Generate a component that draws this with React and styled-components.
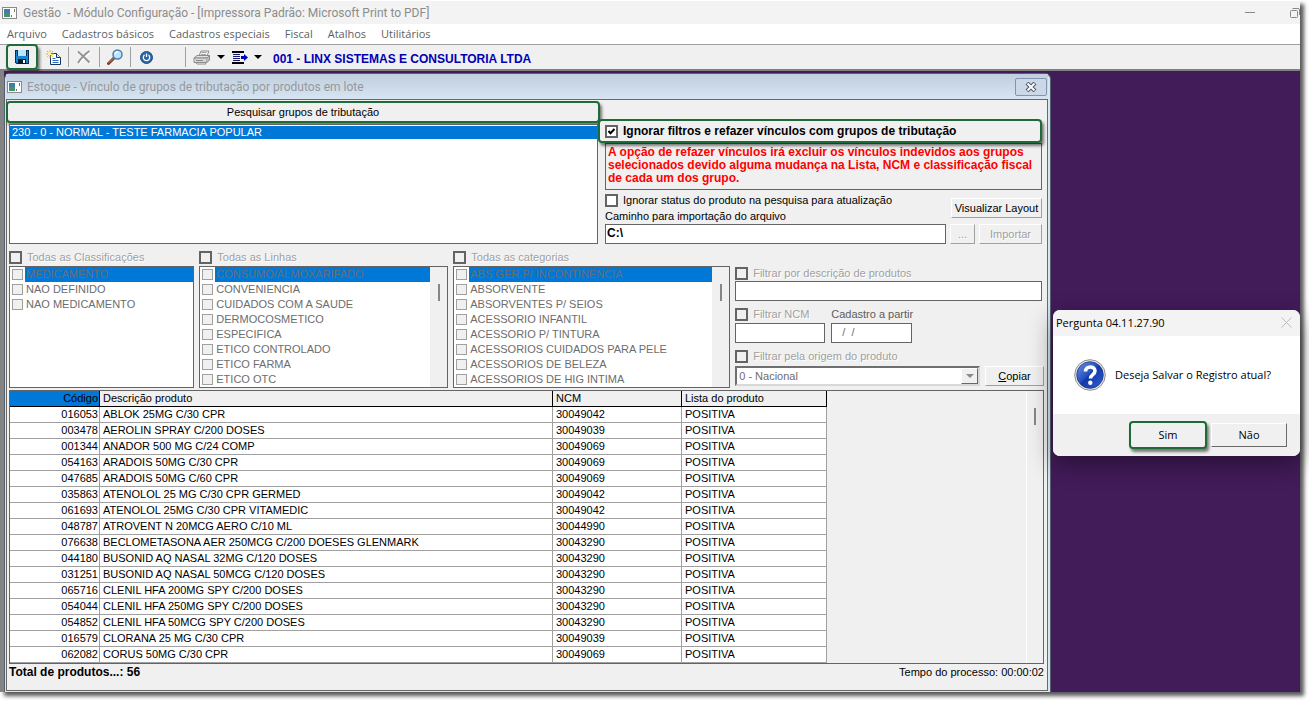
import React from 'react'
import styled, { createGlobalStyle, css } from 'styled-components'

const lists = [
  {
    title: 'Todas as Classificações',
    items: ['MEDICAMENTO', 'NAO DEFINIDO', 'NAO MEDICAMENTO'],
    scroll: false,
  },
  {
    title: 'Todas as Linhas',
    items: ['CONSUMO/ALMOXARIFADO', 'CONVENIENCIA', 'CUIDADOS COM A SAUDE', 'DERMOCOSMETICO', 'ESPECIFICA', 'ETICO CONTROLADO', 'ETICO FARMA', 'ETICO OTC'],
    scroll: true,
  },
  {
    title: 'Todas as categorias',
    items: ['ABS GER P/ INCONTINENCIA', 'ABSORVENTE', 'ABSORVENTES P/ SEIOS', 'ACESSORIO INFANTIL', 'ACESSORIO P/ TINTURA', 'ACESSORIOS CUIDADOS PARA PELE', 'ACESSORIOS DE BELEZA', 'ACESSORIOS DE HIG INTIMA'],
    scroll: true,
  },
]

const products = [
  ['016053', 'ABLOK 25MG C/30 CPR', '30049042'],
  ['003478', 'AEROLIN SPRAY C/200 DOSES', '30049039'],
  ['001344', 'ANADOR 500 MG C/24 COMP', '30049069'],
  ['054163', 'ARADOIS 50MG C/30 CPR', '30049069'],
  ['047685', 'ARADOIS 50MG C/60 CPR', '30049069'],
  ['035863', 'ATENOLOL 25 MG C/30 CPR GERMED', '30049042'],
  ['061693', 'ATENOLOL 25MG C/30 CPR VITAMEDIC', '30049042'],
  ['048787', 'ATROVENT N 20MCG AERO C/10 ML', '30044990'],
  ['076638', 'BECLOMETASONA AER 250MCG C/200 DOESES GLENMARK', '30043290'],
  ['044180', 'BUSONID AQ NASAL 32MG C/120 DOSES', '30043290'],
  ['031251', 'BUSONID AQ NASAL 50MCG C/120 DOSES', '30043290'],
  ['065716', 'CLENIL HFA 200MG SPY C/200 DOSES', '30043290'],
  ['054044', 'CLENIL HFA 250MG SPY C/200 DOSES', '30043290'],
  ['054852', 'CLENIL HFA 50MCG SPY C/200 DOSES', '30043290'],
  ['016579', 'CLORANA 25 MG C/30 CPR', '30049039'],
  ['062082', 'CORUS 50MG C/30 CPR', '30049069'],
]

const AppIcon = () => (
  <svg width="15" height="12" viewBox="0 0 15 12" aria-hidden="true">
    <rect x="0.5" y="0.5" width="14" height="11" fill="#fff" stroke="#8a8a8a" />
    <rect x="2" y="2" width="6" height="8" fill="#3f7fa6" />
    <rect x="2" y="6" width="6" height="4" fill="#4a9169" />
    <rect x="9" y="8" width="1" height="2" fill="#777" />
    <rect x="12" y="2" width="1" height="3" fill="#777" />
  </svg>
)

const SaveIcon = () => (
  <svg width="14" height="14" viewBox="0 0 14 14" aria-hidden="true">
    <path d="M0 0h14v14H1.500L0 12.500z" fill="#0b2d55" />
    <path d="M1 1h1v6h10V1h1v12H2L1 12z" fill="#1787d2" />
    <rect x="3" y="0" width="8" height="6" fill="#b9e6fb" />
    <rect x="1" y="6" width="12" height="2" fill="#1787d2" />
    <rect x="3" y="9" width="8" height="5" fill="#071a30" />
    <rect x="8" y="10" width="2" height="3" fill="#fff" />
  </svg>
)

const NewIcon = () => (
  <svg width="15" height="15" viewBox="0 0 15 15" aria-hidden="true">
    <path d="M4.500 3.500h6l4 4v7h-10z" fill="#fff" stroke="#16365f" />
    <path d="M10.500 3.500v4h4" fill="#cfe2f6" stroke="#16365f" />
    <path d="M6.500 8.500h3M6.500 10.500h6M6.500 12.500h6" stroke="#2a6fc0" />
    <path d="M4 0v8M0 4h8M1 1l6 6M7 1L1 7" stroke="#d9b020" strokeDasharray="2 1" />
    <circle cx="4" cy="4" r="1.500" fill="#fff27a" />
  </svg>
)

const DeleteIcon = () => (
  <svg width="14" height="14" viewBox="0 0 14 14" aria-hidden="true">
    <path d="M2 2l12 12M13.500 2L2 13.500" stroke="#fff" strokeWidth="1.500" fill="none" />
    <path d="M1 1.500C4 4 8 8 12.500 12.500M12.500 1C8 4 4 8 1 13" stroke="#929292" strokeWidth="1.800" fill="none" />
  </svg>
)

const SearchIcon = () => (
  <svg width="17" height="16" viewBox="0 0 17 16" aria-hidden="true">
    <path d="M7 9L1.500 14.500" stroke="#7c4029" strokeWidth="3" strokeLinecap="round" />
    <path d="M7 8.500L2 13.500" stroke="#c98b62" strokeWidth="1" />
    <circle cx="10.500" cy="5.500" r="4.500" fill="#bfe3fb" stroke="#4e7fae" strokeWidth="1.500" />
    <path d="M8 5a3 3 0 0 1 3-2" stroke="#fff" strokeWidth="1.500" fill="none" />
  </svg>
)

const PowerIcon = () => (
  <svg width="13" height="13" viewBox="0 0 13 13" aria-hidden="true">
    <circle cx="6.500" cy="6.500" r="6" fill="#2a66a5" stroke="#1c4f88" />
    <path d="M4.500 4a3.200 3.200 0 1 0 4 0" fill="none" stroke="#fff" strokeWidth="1.300" />
    <path d="M6.500 2.500v3.500" stroke="#fff" strokeWidth="1.300" />
  </svg>
)

const PrinterIcon = () => (
  <svg width="18" height="15" viewBox="0 0 18 15" aria-hidden="true">
    <path d="M6 6L8 1h8l-2 5" fill="#f4f4f4" stroke="#8c8c8c" />
    <path d="M8.500 2.500h5M8 4.500h5" stroke="#a5a5a5" />
    <path d="M1 8l3-2.500h12.500L14 8z" fill="#e2e2e2" stroke="#8c8c8c" />
    <path d="M1 8h13v4.500H1z" fill="#d6d6d6" stroke="#8c8c8c" />
    <path d="M14 8l2.500-2.500V10L14 12.500" fill="#bbb" stroke="#8c8c8c" />
    <path d="M3 12.500h9L13 14H4z" fill="#fff" stroke="#8c8c8c" />
    <path d="M3 10.500h7" stroke="#8c8c8c" />
  </svg>
)

const ExportIcon = () => (
  <svg width="16" height="13" viewBox="0 0 16 13" aria-hidden="true">
    <path d="M0 1h12M0 12h12" stroke="#000" strokeWidth="2" />
    <path d="M1 3.500h7M1 5.500h7M1 7.500h7M1 9.500h7" stroke="#1a1a70" />
    <path d="M9 6.500h4" stroke="#0000c8" strokeWidth="3" />
    <path d="M12 3l4 3.500-4 3.500z" fill="#0000c8" />
  </svg>
)

const Caret = () => (
  <svg width="8" height="4" viewBox="0 0 8 4" aria-hidden="true">
    <path d="M0 0h8L4 4z" fill="#000" />
  </svg>
)

const QuestionIcon = () => (
  <svg width="32" height="32" viewBox="0 0 32 32" aria-hidden="true">
    <defs>
      <linearGradient id="ball" x1="0" y1="0" x2="1" y2="1">
        <stop offset="0" stopColor="#6f95e6" />
        <stop offset="0.45" stopColor="#2450c0" />
        <stop offset="0.5" stopColor="#1338a4" />
        <stop offset="1" stopColor="#2f62e0" />
      </linearGradient>
    </defs>
    <circle cx="16" cy="16" r="15.300" fill="#e9e9e9" stroke="#8d8d8d" />
    <circle cx="16" cy="16" r="13.300" fill="url(#ball)" stroke="#1c3a86" strokeWidth="0.800" />
    <path d="M11.500 12.500c0-6 9.500-6 9.500-0.500 0 3.800-4.500 3.500-4.500 7.500" fill="none" stroke="#fff" strokeWidth="3.600" />
    <circle cx="16.300" cy="23.800" r="2.200" fill="#fff" />
  </svg>
)

const CheckItem = ({ id, label, bold, muted, callout, checked = false }) => (
  <CheckLabel htmlFor={id} $bold={bold} $muted={muted} $callout={callout}>
    <Check id={id} type="checkbox" defaultChecked={checked} disabled={muted} />
    {label}
  </CheckLabel>
)

const ListGroup = ({ title, items, scroll, name }) => (
  <Group>
    <CheckItem id={name} label={title} muted />
    <ListBox>
      <Options>
        {items.map((item, index) => (
          <Option key={item} htmlFor={`${name}-${index}`}>
            <Check id={`${name}-${index}`} type="checkbox" disabled $small />
            <OptionText $selected={index === 0}>{item}</OptionText>
          </Option>
        ))}
      </Options>
      {scroll && <ScrollBar><Thumb /></ScrollBar>}
    </ListBox>
  </Group>
)

const App = () => {
  return (
    <>
      <GlobalStyle />
      <Frame>
        <TitleBar>
          <AppIcon />
          <TitleText>Gestão&nbsp; - Módulo Configuração - [Impressora Padrão: Microsoft Print to PDF]</TitleText>
          <FrameButton aria-label="Minimizar">
            <svg width="10" height="10" viewBox="0 0 10 10"><path d="M0 4.500h10" stroke="#888" /></svg>
          </FrameButton>
          <FrameButton aria-label="Restaurar">
            <svg width="10" height="10" viewBox="0 0 10 10">
              <rect x="0.500" y="2.500" width="7" height="7" rx="1" fill="none" stroke="#888" />
              <path d="M2.500 0.500H8a1.500 1.500 0 0 1 1.500 1.500v5" fill="none" stroke="#888" />
            </svg>
          </FrameButton>
        </TitleBar>

        <MenuBar>
          {['Arquivo', 'Cadastros básicos', 'Cadastros especiais', 'Fiscal', 'Atalhos', 'Utilitários'].map((item) => (
            <MenuItem key={item}>{item}</MenuItem>
          ))}
        </MenuBar>

        <ToolBar>
          <ToolButton $callout aria-label="Salvar"><SaveIcon /></ToolButton>
          <ToolButton aria-label="Novo"><NewIcon /></ToolButton>
          <Separator />
          <ToolButton aria-label="Excluir"><DeleteIcon /></ToolButton>
          <Separator />
          <ToolButton aria-label="Pesquisar"><SearchIcon /></ToolButton>
          <Separator />
          <ToolButton aria-label="Sair"><PowerIcon /></ToolButton>
          <Separator $wide />
          <ToolButton $split aria-label="Imprimir"><PrinterIcon /><Caret /></ToolButton>
          <ToolButton $split aria-label="Exportar"><ExportIcon /><Caret /></ToolButton>
          <Company>001 - LINX SISTEMAS E CONSULTORIA LTDA</Company>
        </ToolBar>

        <Workspace>
          <Child>
            <ChildTitle>
              <AppIcon />
              <TitleText>Estoque - Vínculo de grupos de tributação por produtos em lote</TitleText>
              <CloseButton aria-label="Fechar">
                <svg width="12" height="10" viewBox="0 0 12 10">
                  <path d="M2 1l8 8M10 1L2 9" stroke="#4c5566" strokeWidth="4" />
                  <path d="M2.500 1.500l7 7M9.500 1.500l-7 7" stroke="#fff" strokeWidth="2" />
                </svg>
              </CloseButton>
            </ChildTitle>

            <Body>
              <TopArea>
                <GroupSearch>
                  <SearchButton>Pesquisar grupos de tributação</SearchButton>
                  <GroupList>
                    <GroupRow>230 - 0 - NORMAL - TESTE FARMACIA POPULAR</GroupRow>
                  </GroupList>
                </GroupSearch>
                <ImportArea>
                  <CheckItem id="refazer" label="Ignorar filtros e refazer vínculos com grupos de tributação" bold callout checked />
                  <Warning>
                    A opção de refazer vínculos irá excluir os vínculos indevidos aos grupos<br />
                    selecionados devido alguma mudança na Lista, NCM e classificação fiscal<br />
                    de cada um dos grupo.
                  </Warning>
                  <ImportHead>
                    <div>
                      <CheckItem id="status" label="Ignorar status do produto na pesquisa para atualização" />
                      <FieldLabel htmlFor="caminho">Caminho para importação do arquivo</FieldLabel>
                    </div>
                    <Button $width={91}>Visualizar Layout</Button>
                  </ImportHead>
                  <Line>
                    <Field id="caminho" defaultValue="C:\" $bold />
                    <Button $width={25} disabled>...</Button>
                    <Button $width={63} disabled>Importar</Button>
                  </Line>
                </ImportArea>
              </TopArea>

              <FilterArea>
                {lists.map((list, index) => (
                  <ListGroup key={list.title} name={`lista${index}`} {...list} />
                ))}
                <Filters>
                  <CheckItem id="filtroDescricao" label="Filtrar por descrição de produtos" muted />
                  <Field aria-label="Descrição" disabled />
                  <NcmLine>
                    <CheckItem id="filtroNcm" label="Filtrar NCM" muted />
                    <FieldLabel htmlFor="cadastro" $dim>Cadastro a partir</FieldLabel>
                    <Field aria-label="NCM" disabled />
                    <Field id="cadastro" defaultValue="  /  /" disabled />
                  </NcmLine>
                  <CheckItem id="filtroOrigem" label="Filtrar pela origem do produto" muted />
                  <CopyLine>
                    <SelectBox>
                      <Select aria-label="Origem do produto" disabled>
                        <option>0 - Nacional</option>
                      </Select>
                      <SelectArrow>
                        <svg width="8" height="4" viewBox="0 0 8 4"><path d="M0 0h8L4 4z" fill="#8a8a8a" /></svg>
                      </SelectArrow>
                    </SelectBox>
                    <Button $width={59}><u>C</u>opiar</Button>
                  </CopyLine>
                </Filters>
              </FilterArea>

              <Grid>
                <Table>
                  <colgroup>
                    <col width="90" />
                    <col width="453" />
                    <col width="129" />
                    <col width="145" />
                  </colgroup>
                  <thead>
                    <tr>
                      <Th $active>Código</Th>
                      <Th>Descrição produto</Th>
                      <Th>NCM</Th>
                      <Th>Lista do produto</Th>
                    </tr>
                  </thead>
                  <tbody>
                    {products.map(([code, name, ncm]) => (
                      <tr key={code}>
                        <Td $right>{code}</Td>
                        <Td>{name}</Td>
                        <Td>{ncm}</Td>
                        <Td>POSITIVA</Td>
                      </tr>
                    ))}
                  </tbody>
                </Table>
                <ScrollBar $line><Thumb /></ScrollBar>
              </Grid>

              <Footer>
                <strong>Total de produtos...: 56</strong>
                <span>Tempo do processo: 00:00:02</span>
              </Footer>
            </Body>
          </Child>

          <Dialog role="dialog" aria-labelledby="pergunta">
            <DialogTitle>
              <span id="pergunta">Pergunta 04.11.27.90</span>
              <FrameButton aria-label="Fechar pergunta">
                <svg width="11" height="11" viewBox="0 0 11 11"><path d="M0.500 0.500l10 10M10.500 0.500l-10 10" stroke="#bdbdbd" /></svg>
              </FrameButton>
            </DialogTitle>
            <DialogBody>
              <QuestionIcon />
              <p>Deseja Salvar o Registro atual?</p>
            </DialogBody>
            <DialogActions>
              <DialogButton $callout>Sim</DialogButton>
              <DialogButton>Não</DialogButton>
            </DialogActions>
          </Dialog>
        </Workspace>
      </Frame>
    </>
  )
}

const GlobalStyle = createGlobalStyle`
  * {
    box-sizing: border-box;
  }

  body {
    margin: 0;
    background: #fff;
    font-family: "Liberation Sans", Arial, sans-serif;
    font-size: 11px;
    color: #000;
  }

  button, input, select {
    font: inherit;
    color: inherit;
    margin: 0;
  }

  strong {
    font-size: 12px;
  }

  svg {
    display: block;
    flex: none;
  }
`;

const calloutStyle = css`
  border: 2px solid #1d6b37;
  border-radius: 4px;
  box-shadow: 2px 3px 3px rgba(0, 0, 0, 0.5);
`;

const boldText = css`
  font-size: 12px;
  font-weight: bold;
`;

const Frame = styled.div`
  display: flex;
  flex-direction: column;
  min-height: calc(100vh - 9px);
  margin: 0 9px 9px 0;
  border-top: 1px solid #fff;
  box-shadow: 4px 4px 4px rgba(0, 0, 0, 0.65);
`;

const TitleBar = styled.header`
  display: flex;
  align-items: center;
  gap: 6px;
  height: 23px;
  padding-left: 2px;
  background: #f3f3f3;
  color: #8c8c8c;
`;

const TitleText = styled.span`
  flex: 1;
  font-family: Roboto, sans-serif;
  font-size: 12px;
  white-space: pre;
`;

const FrameButton = styled.button`
  display: flex;
  padding: 0;
  border: 0;
  background: none;

  & + & {
    margin-left: 29px;
  }
`;

const MenuBar = styled.nav`
  display: flex;
  align-items: center;
  gap: 15px;
  height: 20px;
  padding-left: 7px;
  background: #fff;
`;

const MenuItem = styled.button`
  padding: 0;
  border: 0;
  background: none;
  font-family: "Open Sans", "Noto Sans", sans-serif;
  line-height: 18px;
  color: #5f5f5f;
`;

const ToolBar = styled.div`
  display: flex;
  align-items: center;
  height: 27px;
  padding-left: 6px;
  background: #f0f0f0;
  border-top: 1px solid #a0a0a0;
  border-bottom: 2px solid #808080;
`;

const ToolButton = styled.button`
  display: flex;
  align-items: center;
  justify-content: center;
  gap: 6px;
  width: ${({ $split }) => ($split ? '38px' : '30px')};
  height: 24px;
  padding: 0;
  border: 0;
  background: none;
  ${({ $callout }) => $callout && css`
    width: 32px;
    height: 26px;
    ${calloutStyle}
  `}
`;

const Separator = styled.span`
  width: 1px;
  height: 20px;
  background: #a0a0a0;
  margin-left: ${({ $wide }) => ($wide ? '24px' : '0')};
  margin-right: ${({ $wide }) => ($wide ? '4px' : '0')};
`;

const Company = styled.strong`
  margin-left: 7px;
  padding-top: 3px;
  color: #0000b4;
`;

const Workspace = styled.main`
  flex: 1;
  display: flex;
  gap: 2px;
  padding-top: 2px;
  background: #421b59;
  border-left: 4px solid #838383;
`;

const Child = styled.section`
  flex: 1;
  display: flex;
  flex-direction: column;
  padding: 0 2px 1px 1px;
  background: #d7e4f2;
  border: 1px solid #55606e;
  border-bottom: 0;
  border-radius: 6px 6px 0 0;
`;

const ChildTitle = styled.header`
  display: flex;
  align-items: center;
  gap: 5px;
  height: 25px;
  padding: 0 1px;
  background: linear-gradient(#c0cfdd, #d7e4f2);
  color: #94989c;
`;

const CloseButton = styled.button`
  display: flex;
  align-items: center;
  justify-content: center;
  width: 32px;
  height: 18px;
  border: 1px solid #8394b3;
  border-radius: 2px;
  background: #cad8e7;
`;

const Body = styled.div`
  flex: 1;
  padding: 1px 3px 0 2px;
  background: #f0f0f0;
  border: 1px solid #696969;
`;

const TopArea = styled.div`
  display: grid;
  grid-template-columns: 589fr 437fr;
  gap: 7px;
  padding-right: 2px;
`;

const GroupSearch = styled.div`
  display: flex;
  flex-direction: column;
`;

const SearchButton = styled.button`
  height: 22px;
  margin: 0 -2px 1px -3px;
  padding: 0;
  background: #f0f0f0;
  ${calloutStyle}
`;

const GroupList = styled.div`
  flex: 1;
  padding: 1px 0;
  background: #fff;
  border: 1px solid #646464;
`;

const GroupRow = styled.div`
  padding: 0 2px;
  background: #0078d7;
  color: #fff;
  line-height: 13px;
`;

const ImportArea = styled.div`
  padding-top: 18px;
`;

const CheckLabel = styled.label`
  display: flex;
  align-items: center;
  gap: 5px;
  height: 16px;
  white-space: nowrap;
  ${({ $muted }) => $muted && css`
    color: #a0a0a0;
    text-shadow: 1px 1px #fff;
  `}
  ${({ $bold }) => $bold && boldText}
  ${({ $callout }) => $callout && css`
    position: relative;
    height: 24px;
    margin-left: -7px;
    padding-left: 5px;
    background: #f0f0f0;
    ${calloutStyle}
  `}
`;

const Check = styled.input`
  appearance: none;
  flex: none;
  width: ${({ $small }) => ($small ? '11px' : '13px')};
  height: ${({ $small }) => ($small ? '11px' : '13px')};
  border: ${({ $small }) => ($small ? '1px solid #a0a0a0' : '2px solid #646464')};
  background: #fff;

  &:disabled {
    background: #f0f0f0;
  }

  &:checked {
    background: #fff url("data:image/svg+xml,%3Csvg xmlns='http://www.w3.org/2000/svg' viewBox='0 0 9 9'%3E%3Cpath d='M1.500 4l2 2.200L7.500 2' fill='none' stroke='%23000' stroke-width='2'/%3E%3C/svg%3E");
  }
`;

const Warning = styled.p`
  height: 47px;
  margin: 0 0 2px;
  padding: 2px;
  border: 1px solid #646464;
  ${boldText}
  line-height: 13px;
  color: #f00;
  white-space: nowrap;
`;

const ImportHead = styled.div`
  display: flex;
  align-items: center;
  justify-content: space-between;
  height: 32px;
`;

const FieldLabel = styled.label`
  display: block;
  line-height: 16px;
  white-space: nowrap;
  color: ${({ $dim }) => ($dim ? '#5c5c5c' : '#000')};
`;

const Line = styled.div`
  display: flex;
  gap: 4px;
`;

const Field = styled.input`
  flex: 1;
  width: 100%;
  min-width: 0;
  height: 20px;
  padding: 0 1px 2px;
  background: #fff;
  border: 1px solid #646464;
  border-radius: 0;
  white-space: pre;
  ${({ $bold }) => $bold && boldText}

  &:disabled {
    padding-left: 4px;
    color: #6d6d6d;
  }
`;

const Button = styled.button`
  flex: none;
  width: ${({ $width }) => $width}px;
  height: 20px;
  padding: 0;
  background: #f0f0f0;
  border: 1px solid;
  border-color: #fff #a0a0a0 #a0a0a0 #fff;
  white-space: nowrap;

  &:disabled {
    color: #a0a0a0;
    text-shadow: 1px 1px #fff;
  }
`;

const FilterArea = styled.div`
  display: grid;
  grid-template-columns: 186fr 250fr 278fr 308fr;
  gap: 5px;
  padding: 5px 2px 0 0;
`;

const Group = styled.div`
  min-width: 0;
`;

const ListBox = styled.div`
  display: flex;
  height: 122px;
  margin-top: 1px;
  background: #fff;
  border: 1px solid #646464;
`;

const Options = styled.div`
  flex: 1;
  min-width: 0;
`;

const Option = styled.label`
  display: flex;
  align-items: center;
  height: 15px;
  padding-left: 2px;
  gap: 2px;
  color: #6d6d6d;
`;

const OptionText = styled.span`
  flex: 1;
  padding-left: 1px;
  line-height: 15px;
  white-space: nowrap;
  background: ${({ $selected }) => ($selected ? '#0078d7' : 'none')};
`;

const ScrollBar = styled.div`
  display: flex;
  justify-content: center;
  flex: none;
  width: 17px;
  padding-top: 17px;
  background: #f0f0f0;
  border-left: ${({ $line }) => ($line ? '1px solid #fff' : '0')};
`;

const Thumb = styled.span`
  width: 2px;
  height: 17px;
  background: #868686;
`;

const Filters = styled.div`
  padding-top: 16px;
`;

const NcmLine = styled.div`
  display: grid;
  grid-template-columns: 90px 81px;
  column-gap: 6px;
  row-gap: 1px;
  padding: 5px 0;
`;

const CopyLine = styled.div`
  display: flex;
  align-items: center;
  gap: 5px;
  margin: 2px -2px 0 0;
`;

const SelectBox = styled.div`
  flex: 1;
  display: flex;
  height: 20px;
  background: #fff;
  border: 2px solid;
  border-color: #6f6f6f #d8d8d8 #d8d8d8 #6f6f6f;
`;

const Select = styled.select`
  appearance: none;
  flex: 1;
  padding: 0 2px;
  border: 0;
  background: #fff;

  &:disabled {
    color: #6d6d6d;
    opacity: 1;
  }
`;

const SelectArrow = styled.span`
  display: flex;
  align-items: center;
  justify-content: center;
  width: 17px;
  background: #f0f0f0;
  border: 1px solid;
  border-color: #fff #696969 #696969 #fff;
  pointer-events: none;
`;

const Grid = styled.div`
  display: flex;
  justify-content: space-between;
  margin-top: 2px;
  border: 1px solid #646464;
  border-bottom: 0;
`;

const Table = styled.table`
  width: 817px;
  table-layout: fixed;
  border-collapse: separate;
  border-spacing: 0;
  background: #fff;
`;

const Th = styled.th`
  height: 16px;
  padding: 0 3px;
  border-right: 1px solid #000;
  border-bottom: 1px solid #000;
  background: ${({ $active }) => ($active ? '#0078d7' : '#f0f0f0')};
  text-align: ${({ $active }) => ($active ? 'right' : 'left')};
  font-weight: normal;
  line-height: 15px;

  &:first-child {
    padding-right: 1px;
  }
`;

const Td = styled.td`
  height: 16px;
  padding: 0 3px;
  border-right: 1px solid #a0a0a0;
  border-bottom: 1px solid #a0a0a0;
  text-align: ${({ $right }) => ($right ? 'right' : 'left')};
  line-height: 15px;
  white-space: nowrap;

  &:first-child {
    padding-right: 1px;
  }
`;

const Footer = styled.footer`
  display: flex;
  justify-content: space-between;
  height: 27px;
  border-top: 1px solid #646464;
  line-height: 16px;
`;

const Dialog = styled.section`
  align-self: center;
  width: 247px;
  overflow: hidden;
  background: #fff;
  border-radius: 7px;
  box-shadow: 0 8px 24px rgba(0, 0, 0, 0.4);
`;

const DialogTitle = styled.header`
  display: flex;
  align-items: center;
  justify-content: space-between;
  height: 26px;
  padding: 0 8px 0 3px;
  background: #f3f3f3;
  font-family: "Open Sans", "Noto Sans", sans-serif;
`;

const DialogBody = styled.div`
  display: flex;
  align-items: center;
  gap: 9px;
  height: 78px;
  padding-left: 21px;
  font-family: "Open Sans", "Noto Sans", sans-serif;

  p {
    margin: 0;
  }
`;

const DialogActions = styled.div`
  display: flex;
  align-items: center;
  justify-content: flex-end;
  gap: 4px;
  height: 42px;
  padding-right: 13px;
  background: #f0f0f0;
`;

const DialogButton = styled.button`
  width: 76px;
  height: 24px;
  padding: 0;
  background: #f0f0f0;
  border: 1px solid;
  border-color: #fff #696969 #696969 #fff;
  font-family: "Open Sans", "Noto Sans", sans-serif;
  ${({ $callout }) => $callout && css`
    width: 78px;
    height: 28px;
    ${calloutStyle}
  `}
`;

export default App
